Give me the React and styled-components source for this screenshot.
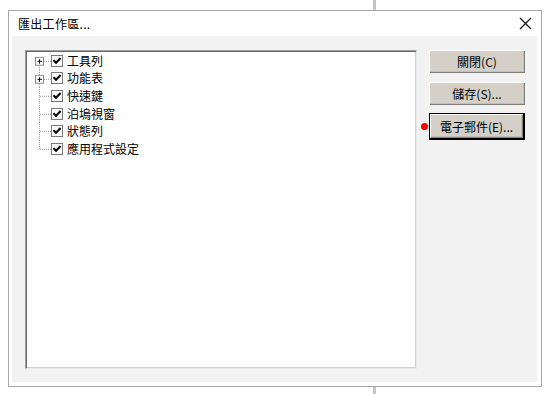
import React from 'react';
import styled, { createGlobalStyle } from 'styled-components';

const Global = createGlobalStyle`
  html, body {
    margin: 0;
    padding: 0;
    background: #fff;
  }
  body {
    font-family: "Noto Sans CJK TC", "Liberation Sans", sans-serif;
    font-size: 12px;
    color: #000;
  }
`;

const Page = styled.div`
  width: 548px;
  height: 394px;
  display: flex;
  flex-direction: column;
  overflow: hidden;
`;

const Splitter = styled.div`
  margin-left: 373px;
  width: 3px;
  height: ${props => props.grow ? 'auto' : '10px'};
  flex: ${props => props.grow ? 1 : 'none'};
  background: #c4c4c4;
`;

const Dialog = styled.div`
  margin-left: 8px;
  width: 534px;
  height: 377px;
  box-sizing: border-box;
  border: 1px solid #a9a9a9;
  background: #fff;
  display: flex;
  flex-direction: column;
  padding: 0 4px 4px 3px;
`;

const TitleBar = styled.div`
  height: 25px;
  display: flex;
  align-items: center;
  justify-content: space-between;
  padding: 0 5px 0 6px;
`;

const Title = styled.span`
  font-size: 12px;
  line-height: 1;
  letter-spacing: 0.3px;
`;

const CloseButton = styled.svg`
  width: 13px;
  height: 13px;
  display: block;
`;

const Body = styled.div`
  flex: 1;
  background: #f2f2f2;
  display: flex;
  gap: 12px;
  padding: 14px 12px 13px 13px;
  box-sizing: border-box;
`;

const TreeBox = styled.div`
  width: 393px;
  height: 319px;
  box-sizing: border-box;
  background: #fff;
  border: 1px solid;
  border-color: #a0a0a0 #e8e8e8 #e8e8e8 #a0a0a0;
  box-shadow: inset 1px 1px 0 #696969, inset -1px -1px 0 #d4d0c8;
  padding: 1px 0 0 1px;
`;

const TreeRow = styled.div`
  height: 17.6px;
  display: flex;
  align-items: center;
`;

const Gutter = styled.svg`
  width: 24px;
  height: 100%;
  flex: none;
  display: block;
`;

const CheckIcon = styled.svg`
  width: 12px;
  height: 12px;
  flex: none;
  display: block;
`;

const Label = styled.span`
  margin-left: 4px;
  font-size: 12px;
  line-height: 1;
  white-space: nowrap;
`;

const Buttons = styled.div`
  display: flex;
  flex-direction: column;
  gap: 9px;
  width: 96px;
`;

const Button = styled.button`
  position: relative;
  width: 96px;
  height: ${props => props.$default ? '27px' : '23px'};
  margin-top: ${props => props.$default ? '-1px' : '0'};
  box-sizing: border-box;
  background: #d4d0c8;
  border: ${props => props.$default ? '1px solid #000' : 'none'};
  border-right-width: ${props => props.$default ? '2px' : '0'};
  border-bottom-width: ${props => props.$default ? '2px' : '0'};
  box-shadow: inset 1px 1px 0 #ffffff, inset -1px -1px 0 #808080, inset -2px -2px 0 #c4c0b8;
  font-family: "Noto Sans CJK TC", "Liberation Sans", sans-serif;
  font-size: 12px;
  color: #000;
  padding: 0;
  display: flex;
  align-items: center;
  justify-content: center;
  cursor: default;
`;

const Marker = styled.span`
  position: absolute;
  left: -9px;
  top: 50%;
  width: 7px;
  height: 7px;
  margin-top: -3px;
  border-radius: 50%;
  background: #ff0000;
`;

const items = [
  { label: '工具列', expandable: true },
  { label: '功能表', expandable: true },
  { label: '快速鍵' },
  { label: '泊塢視窗' },
  { label: '狀態列' },
  { label: '應用程式設定' },
];

function Connector({ expandable, first, last }) {
  const dots = { stroke: '#9a9a9a', strokeWidth: 1, strokeDasharray: '1 1', shapeRendering: 'crispEdges' };
  return (
    <Gutter viewBox="0 0 24 18" preserveAspectRatio="none">
      {!last && <line x1="12.5" y1={first ? 13 : 0} x2="12.5" y2="18" {...dots} />}
      {last && <line x1="12.5" y1="0" x2="12.5" y2="9" {...dots} />}
      {!first && expandable && <line x1="12.5" y1="0" x2="12.5" y2="5" {...dots} />}
      <line x1={expandable ? 17 : 13} y1="9.5" x2="24" y2="9.5" {...dots} />
      {expandable && (
        <g shapeRendering="crispEdges">
          <rect x="8.5" y="5.5" width="8" height="8" fill="#fff" stroke="#8a8a8a" />
          <line x1="10.5" y1="9.5" x2="15" y2="9.5" stroke="#000" />
          <line x1="12.5" y1="7.5" x2="12.5" y2="12" stroke="#000" />
        </g>
      )}
    </Gutter>
  );
}

function Check() {
  return (
    <CheckIcon viewBox="0 0 12 12">
      <rect x="0.5" y="0.5" width="11" height="11" fill="#fff" stroke="#7a7a7a" shapeRendering="crispEdges" />
      <path d="M2.5 5.3 L5 7.8 L9.6 3" fill="none" stroke="#000" strokeWidth="2.1" />
    </CheckIcon>
  );
}

export default function App() {
  return (
    <Page>
      <Global />
      <Splitter />
      <Dialog>
        <TitleBar>
          <Title>匯出工作區...</Title>
          <CloseButton viewBox="0 0 13 13">
            <path d="M1 1 L12 12 M12 1 L1 12" stroke="#222" strokeWidth="1.4" />
          </CloseButton>
        </TitleBar>
        <Body>
          <TreeBox>
            {items.map((item, i) => (
              <TreeRow key={item.label}>
                <Connector expandable={item.expandable} first={i === 0} last={i === items.length - 1} />
                <Check />
                <Label>{item.label}</Label>
              </TreeRow>
            ))}
          </TreeBox>
          <Buttons>
            <Button>關閉(C)</Button>
            <Button>儲存(S)...</Button>
            <Button $default>
              <Marker />
              電子郵件(E)...
            </Button>
          </Buttons>
        </Body>
      </Dialog>
      <Splitter grow />
    </Page>
  );
}
